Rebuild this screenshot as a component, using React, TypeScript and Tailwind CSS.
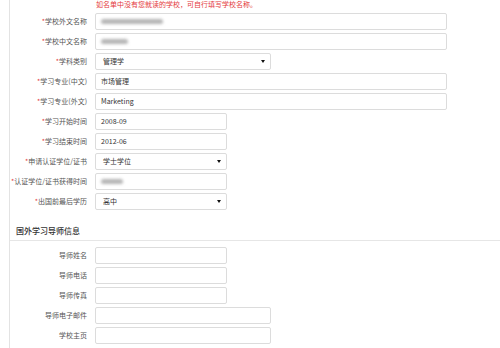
import type { ReactNode } from 'react';

const font = { fontFamily: '"Noto Sans CJK SC", "Noto Sans", sans-serif' };

type RowProps = {
  label: string;
  required?: boolean;
  width: string;
  children?: ReactNode;
  select?: boolean;
};

const Row = ({ label, required, width, children, select }: RowProps) => (
  <div className="flex h-5 items-center">
    <div className="w-[77px] shrink-0 text-right text-[7px] leading-none text-[#555] whitespace-nowrap">
      {required && <span className="text-[#e4393c]">*</span>}
      {label}
    </div>
    <div
      className={`ml-2 flex h-[17px] items-center rounded-[2px] border border-[#dcdcdc] bg-white pl-[5px] pr-[5px] text-[7px] text-[#333] ${width}`}
    >
      <div className="flex-1">{children}</div>
      {select && (
        <svg width="4" height="3" viewBox="0 0 4 3">
          <path d="M0 0h4L2 3z" fill="#111" />
        </svg>
      )}
    </div>
  </div>
);

const Blur = ({ w }: { w: string }) => (
  <div className={`h-[5px] rounded-full bg-[#b5b5b5] blur-[1.5px] ${w}`} />
);

export default function App() {
  return (
    <div className="h-[348px] w-[500px] overflow-hidden bg-white" style={font}>
      <div className="ml-[9px] h-full border-l border-[#e3e3e3]">
        <div className="h-[11px] pl-[86px] text-[7px] leading-[8px] text-[#e4393c] whitespace-nowrap">
          如名单中没有您就读的学校，可自行填写学校名称。
        </div>

        <Row label="学校外文名称" required width="w-[352px]">
          <Blur w="w-[62px]" />
        </Row>
        <Row label="学校中文名称" required width="w-[352px]">
          <Blur w="w-[27px]" />
        </Row>
        <Row label="学科类别" required width="w-[176px]" select>
          <span className="pl-[2px]">管理学</span>
        </Row>
        <Row label="学习专业(中文)" required width="w-[352px]">
          市场管理
        </Row>
        <Row label="学习专业(外文)" required width="w-[352px]">
          Marketing
        </Row>
        <Row label="学习开始时间" required width="w-[132px]">
          2008-09
        </Row>
        <Row label="学习结束时间" required width="w-[132px]">
          2012-06
        </Row>
        <Row label="申请认证学位/证书" required width="w-[132px]" select>
          <span className="pl-[2px]">学士学位</span>
        </Row>
        <Row label="认证学位/证书获得时间" required width="w-[132px]">
          <Blur w="w-[22px]" />
        </Row>
        <Row label="出国前最后学历" required width="w-[132px]" select>
          <span className="pl-[2px]">高中</span>
        </Row>

        <div className="mt-[11px] flex h-[19px] items-center border-b border-[#e6e6e6] pl-[6px] text-[8px] font-medium text-[#333]">
          国外学习导师信息
        </div>
        <div className="pt-1">
          <Row label="导师姓名" width="w-[132px]" />
          <Row label="导师电话" width="w-[132px]" />
          <Row label="导师传真" width="w-[132px]" />
          <Row label="导师电子邮件" width="w-[176px]" />
          <Row label="学校主页" width="w-[176px]" />
        </div>
      </div>
    </div>
  );
}
